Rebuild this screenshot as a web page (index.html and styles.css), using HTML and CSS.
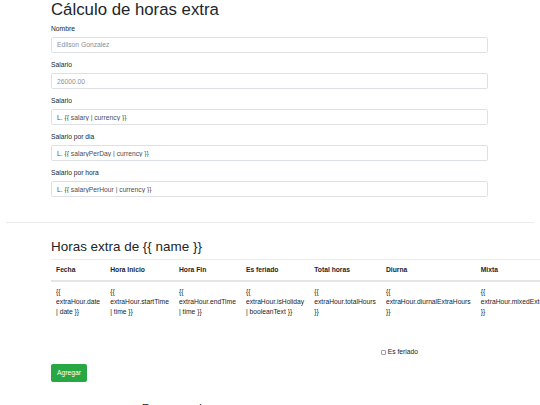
FILE: index.html
```html
<!DOCTYPE html>
<html lang="es">
<head>
  <meta charset="UTF-8" />
  <title>Cálculo de horas extra</title>
  <link rel="stylesheet" href="styles.css">
</head>
<body>
  <div class="page">
    <!-- Datos del empleado -->
    <div class="section">
      <h1>Cálculo de horas extra</h1>

      <div class="form-group">
        <label for="name">Nombre</label>
        <input id="name" class="form-control" placeholder="Edilson Gonzalez">
      </div>
      <div class="form-group">
        <label for="salary">Salario</label>
        <input id="salary" class="form-control" placeholder="26000.00">
      </div>
      <div class="form-group">
        <label for="salaryText">Salario</label>
        <input id="salaryText" class="form-control" value="L. {{ salary | currency }}" readonly>
      </div>
      <div class="form-group">
        <label for="salaryDay">Salario por dia</label>
        <input id="salaryDay" class="form-control" value="L. {{ salaryPerDay | currency }}" readonly>
      </div>
      <div class="form-group">
        <label for="salaryHour">Salario por hora</label>
        <input id="salaryHour" class="form-control" value="L. {{ salaryPerHour | currency }}" readonly>
      </div>
    </div>

    <hr>

    <!-- Horas extra -->
    <div class="section">
      <h2>Horas extra de {{ name }}</h2>
      <table class="table">
        <thead>
          <tr>
            <th>Fecha</th>
            <th>Hora Inicio</th>
            <th>Hora Fin</th>
            <th>Es feriado</th>
            <th>Total horas</th>
            <th>Diurna</th>
            <th>Mixta</th>
          </tr>
        </thead>
        <tbody>
          <tr>
            <td>{{ extraHour.date | date }}</td>
            <td>{{ extraHour.startTime | time }}</td>
            <td>{{ extraHour.endTime | time }}</td>
            <td>{{ extraHour.isHoliday | booleanText }}</td>
            <td>{{ extraHour.totalHours }}</td>
            <td>{{ extraHour.diurnalExtraHours }}</td>
            <td>{{ extraHour.mixedExtraHours }}</td>
          </tr>
        </tbody>
      </table>

      <div class="holiday">
        <input id="isHoliday" type="checkbox">
        <label for="isHoliday">Es feriado</label>
      </div>

      <div class="actions">
        <button class="btn-success">Agregar</button>
      </div>

      <h3 class="summary-title">Resumen de semana</h3>
    </div>
  </div>
</body>
</html>
```

FILE: styles.css
```css
body {
  margin: 0;
  font-family: "Liberation Sans", Arial, sans-serif;
  font-size: 6.72px;
  line-height: 1.5;
  color: #212529;
  background: white;
}

.page {
  display: flex;
  flex-direction: column;
  padding: 0 6px;
  overflow: hidden;
}

.section {
  margin-left: 45px;
  width: 437px;
}

h1, h2, h3 {
  font-weight: normal;
  line-height: 1.2;
  margin: 0 0 3.36px;
}

h1 {
  font-size: 16.8px;
}

h2 {
  font-size: 13.44px;
  margin-top: 16.8px;
}

h3 {
  font-size: 11.76px;
}

.form-group {
  margin-bottom: 6.72px;
}

label {
  display: block;
  margin-bottom: 3.36px;
}

.form-control {
  display: block;
  box-sizing: border-box;
  width: 100%;
  height: 15.96px;
  padding: 2.5px 5.04px;
  font: inherit;
  color: #495057;
  background: white;
  border: 1px solid #dde1e5;
  border-radius: 1.7px;
}

.form-control::placeholder {
  color: #8a9096;
}

hr {
  margin: 17.6px 0 0;
  border: 0;
  border-top: 1px solid rgba(0, 0, 0, 0.08);
}

.table {
  width: 100%;
  border-collapse: collapse;
}

.table th,
.table td {
  padding: 5.04px;
  text-align: left;
  vertical-align: top;
  border-top: 1px solid #e9ecef;
}

.table thead th {
  font-weight: bold;
  border-bottom: 2px solid #e3e6e9;
}

.holiday {
  display: flex;
  align-items: center;
  gap: 2px;
  margin-top: 25px;
  padding-left: 329.7px;
  line-height: 10.08px;
}

.holiday input {
  appearance: none;
  width: 5px;
  height: 5px;
  margin: 0;
  border: 1px solid #a0a0a0;
  border-radius: 1px;
  box-sizing: border-box;
}

.holiday label {
  margin: 0;
}

.actions {
  margin-top: 7px;
}

.btn-success {
  padding: 2.5px 5px;
  font: inherit;
  color: white;
  background-color: #28a745;
  border: 1px solid #28a745;
  border-radius: 1.7px;
  cursor: pointer;
}

.summary-title {
  margin: 19.8px 0 0 90.7px;
}
```
